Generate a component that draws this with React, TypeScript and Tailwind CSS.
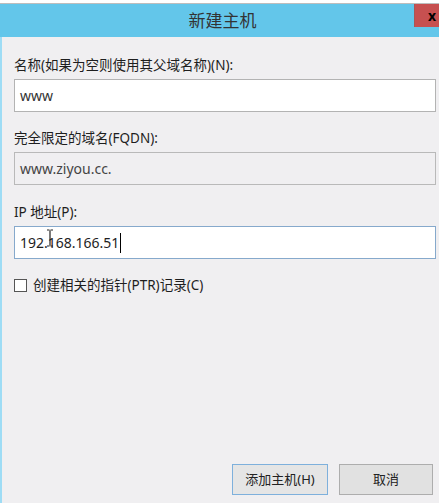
const font = { fontFamily: '"Noto Sans", "Noto Sans CJK SC", sans-serif' }

function Field({ label, value, disabled, focused }: { label: string; value: string; disabled?: boolean; focused?: boolean }) {
  return (
    <div className="flex flex-col">
      <div className="h-[20px] text-[13.5px] leading-[20px] text-[#1e1e1e]">{label}</div>
      <div
        className={
          'relative mt-[4px] flex h-[33px] items-center border px-[5px] text-[14px] ' +
          (disabled
            ? 'border-[#b9b9b9] bg-[#f0eff1] text-[#444]'
            : focused
              ? 'border-[#86a9cc] bg-white text-[#1e1e1e]'
              : 'border-[#b3b3b3] bg-white text-[#333]')
        }
      >
        <span>{value}</span>
        {focused && <span className="ml-[1px] h-[20px] w-[1px] bg-black" />}
        {focused && (
          <svg className="absolute left-[31px] top-[2px]" width="8" height="18" viewBox="0 0 8 18">
            <path d="M1 1h2.5M4.5 1H7M4 1.5v15M1 17h2.5M4.5 17H7" stroke="#222" strokeWidth="1.2" fill="none" />
          </svg>
        )}
      </div>
    </div>
  )
}

export default function App() {
  return (
    <div className="flex h-[503px] w-[439px] flex-col overflow-hidden bg-[#f0eff1]" style={font}>
      {/* background window peeking above */}
      <div className="h-[4px] border-b border-[#bdbdbd] bg-white" />

      <div className="relative flex h-[33px] items-center justify-center bg-[#63c6ea]">
        <span className="pl-[6px] text-[17px] text-[#333]">新建主机</span>
        <div className="absolute right-0 top-0 flex h-[23px] w-[25px] items-center justify-end border-l border-[#a55] bg-[#c75050] pr-[3px] text-[14px] font-bold text-black">
          x
        </div>
      </div>

      <div className="flex flex-1 flex-col border-l-2 border-[#9edcf5] pb-[8px] pl-[12px] pr-[3px] pt-[18px]">
        <Field label="名称(如果为空则使用其父域名称)(N):" value="www" />
        <div className="mt-[16px]">
          <Field label="完全限定的域名(FQDN):" value="www.ziyou.cc." disabled />
        </div>
        <div className="mt-[17px]">
          <Field label="IP 地址(P):" value="192.168.166.51" focused />
        </div>

        <div className="mt-[16px] flex items-center gap-[6px]">
          <div className="h-[13px] w-[13px] border border-[#555] bg-white" />
          <span className="text-[13.5px] text-[#1e1e1e]">创建相关的指针(PTR)记录(C)</span>
        </div>

        <div className="mt-auto flex justify-end gap-[11px] pr-[3px]">
          <button className="h-[31px] w-[96px] border border-[#7eb0dc] bg-[#e5e5e5] text-[13px] text-[#222]">
            添加主机(H)
          </button>
          <button className="h-[31px] w-[94px] border border-[#adadad] bg-[#e1e1e1] text-[13px] text-[#222]">
            取消
          </button>
        </div>
      </div>
    </div>
  )
}
